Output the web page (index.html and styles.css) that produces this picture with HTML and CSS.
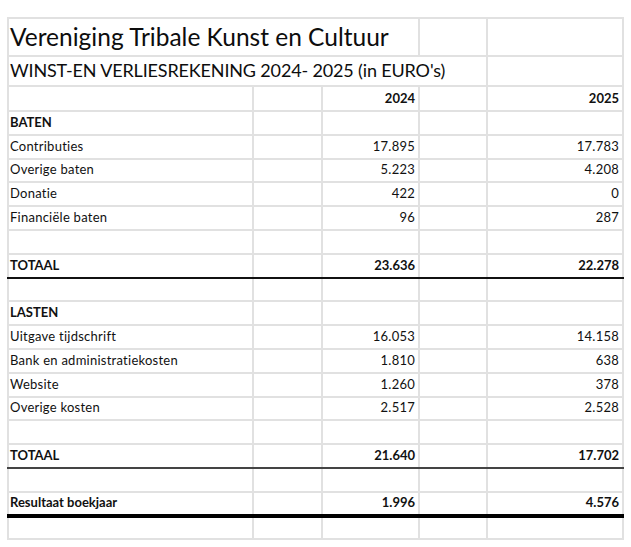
FILE: index.html
```html
<!DOCTYPE html>
<html lang="nl">
<head>
<meta charset="utf-8">
<title>Vereniging Tribale Kunst en Cultuur</title>
<link rel="stylesheet" href="styles.css">
</head>
<body>
<table class="sheet">
  <colgroup>
    <col class="c1"><col class="c2"><col class="c3"><col class="c4"><col class="c5">
  </colgroup>
  <tr class="r-title">
    <td colspan="3" class="title">Vereniging Tribale Kunst en Cultuur</td>
    <td></td><td></td>
  </tr>
  <tr class="r-sub">
    <td colspan="4" class="subtitle">WINST-EN VERLIESREKENING 2024- 2025 (in EURO's)</td>
    <td></td>
  </tr>
  <tr class="r-head">
    <td></td><td></td><td class="num b">2024</td><td></td><td class="num b">2025</td>
  </tr>
  <tr><td class="b">BATEN</td><td></td><td></td><td></td><td></td></tr>
  <tr><td>Contributies</td><td></td><td class="num">17.895</td><td></td><td class="num">17.783</td></tr>
  <tr><td>Overige baten</td><td></td><td class="num">5.223</td><td></td><td class="num">4.208</td></tr>
  <tr><td>Donatie</td><td></td><td class="num">422</td><td></td><td class="num">0</td></tr>
  <tr><td>Financiële baten</td><td></td><td class="num">96</td><td></td><td class="num">287</td></tr>
  <tr><td></td><td></td><td></td><td></td><td></td></tr>
  <tr class="total"><td class="b">TOTAAL</td><td></td><td class="num b">23.636</td><td></td><td class="num b">22.278</td></tr>
  <tr><td></td><td></td><td></td><td></td><td></td></tr>
  <tr><td class="b">LASTEN</td><td></td><td></td><td></td><td></td></tr>
  <tr><td>Uitgave tijdschrift</td><td></td><td class="num">16.053</td><td></td><td class="num">14.158</td></tr>
  <tr><td>Bank en administratiekosten</td><td></td><td class="num">1.810</td><td></td><td class="num">638</td></tr>
  <tr><td>Website</td><td></td><td class="num">1.260</td><td></td><td class="num">378</td></tr>
  <tr><td>Overige kosten</td><td></td><td class="num">2.517</td><td></td><td class="num">2.528</td></tr>
  <tr><td></td><td></td><td></td><td></td><td></td></tr>
  <tr class="total2"><td class="b">TOTAAL</td><td></td><td class="num b">21.640</td><td></td><td class="num b">17.702</td></tr>
  <tr><td></td><td></td><td></td><td></td><td></td></tr>
  <tr class="result"><td class="b">Resultaat boekjaar</td><td></td><td class="num b">1.996</td><td></td><td class="num b">4.576</td></tr>
  <tr><td></td><td></td><td></td><td></td><td></td></tr>
</table>
</body>
</html>
```
FILE: styles.css
```css
html, body {
  margin: 0;
  padding: 0;
  background: #ffffff;
}
body {
  font-family: Lato, "Open Sans", sans-serif;
  color: #111111;
}
.sheet {
  border-collapse: collapse;
  table-layout: fixed;
  margin: 17px 0 0 7px;
  width: 615px;
}
.c1 { width: 245px; }
.c2 { width: 69px; }
.c3 { width: 97px; }
.c4 { width: 68px; }
.c5 { width: 136px; }
.sheet td {
  border: 2px solid #e1e1e1;
  padding: 0 3px 5px 1px;
  vertical-align: bottom;
  font-size: 13px;
  line-height: 14px;
  letter-spacing: 0.25px;
  white-space: nowrap;
  overflow: visible;
}
.sheet tr { height: 23.8px; }
.sheet .r-title { height: 38px; }
.sheet .r-sub { height: 30px; }
.sheet .r-head { height: 25px; }
.sheet td.title {
  font-size: 24.5px;
  line-height: 26px;
  letter-spacing: 0;
  padding-bottom: 5px;
  color: #0d0d0d;
}
.sheet td.subtitle {
  font-size: 18px;
  line-height: 22px;
  letter-spacing: -0.15px;
  padding-bottom: 4px;
  color: #0d0d0d;
}
.sheet td.b {
  font-weight: 700;
  letter-spacing: 0;
}
.num { text-align: right; }
.total td {
  border-top: 2px solid #111;
  border-bottom: 2px solid #111;
}
.total2 td {
  border-top: 2px solid #111;
  border-bottom: 2px solid #444;
}
.result td {
  border-top: 2px solid #111;
  border-bottom: 4px solid #000;
}
```
